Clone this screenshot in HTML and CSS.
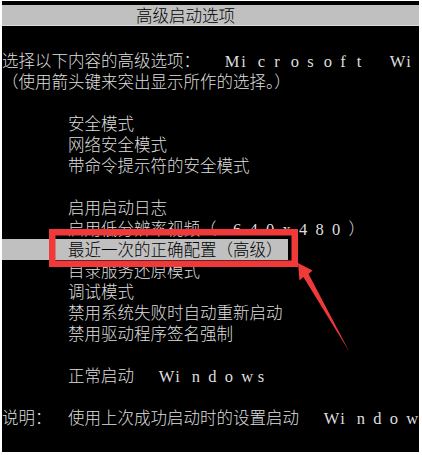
FILE: index.html
```html
<!DOCTYPE html>
<html lang="zh-CN">
<head>
    <meta charset="UTF-8">
    <title>高级启动选项</title>
    <link rel="stylesheet" href="styles.css">
</head>
<body>

    <div class="screen">
        <div class="title-bar">高级启动选项</div>

        <div class="content">
            <div class="line">选择以下内容的高级选项：<span class="en"><span>M</span><span>i</span><span>c</span><span>r</span><span>o</span><span>s</span><span>o</span><span>f</span><span>t</span><span>&nbsp;</span><span>W</span><span>i</span><span>n</span><span>d</span><span>o</span><span>w</span><span>s</span></span></div>
            <div class="line">（使用箭头键来突出显示所作的选择。）</div>

            <ul class="menu">
                <li>安全模式</li>
                <li>网络安全模式</li>
                <li>带命令提示符的安全模式</li>
            </ul>

            <ul class="menu">
                <li>启用启动日志</li>
                <li>启用低分辨率视频（<span class="en num"><span>6</span><span>4</span><span>0</span><span>x</span><span>4</span><span>8</span><span>0</span></span>）</li>
                <li class="selected">最近一次的正确配置（高级）</li>
                <li>目录服务还原模式</li>
                <li>调试模式</li>
                <li>禁用系统失败时自动重新启动</li>
                <li>禁用驱动程序签名强制</li>
            </ul>

            <ul class="menu">
                <li>正常启动<span class="en"><span>W</span><span>i</span><span>n</span><span>d</span><span>o</span><span>w</span><span>s</span></span></li>
            </ul>

            <div class="line note"><span class="label">说明：</span>使用上次成功启动时的设置启动<span class="en"><span>W</span><span>i</span><span>n</span><span>d</span><span>o</span><span>w</span><span>s</span></span></div>
        </div>

        <!-- red annotation drawn over the screen -->
        <svg class="mark" width="417" height="451" viewBox="0 0 417 451">
            <rect x="50.25" y="231.25" width="242.5" height="31.5" fill="none" stroke="#f03a3a" stroke-width="6.5"/>
            <polygon points="296,262 310.5,269.5 306.6,273 347.5,351 301.4,276 297.5,279.5" fill="#f03a3a"/>
        </svg>
    </div>

</body>
</html>
```

FILE: styles.css
```css
body {
    margin: 0;
    background-color: #ffffff;
}

.screen {
    position: relative;
    width: 417px;
    height: 451px;
    margin: 1px 3px 3px 2px;
    background-color: #000000;
    overflow: hidden;
    color: #dedede;
    font-family: "Noto Sans CJK SC", sans-serif;
    font-size: 16.5px;
    font-weight: 300;
    line-height: 21px;
    white-space: nowrap;
}

.title-bar {
    margin-top: 4px;
    height: 20px;
    line-height: 20px;
    padding-left: 134px;
    background-color: #c0c0c0;
    border-bottom: 1px solid #dadada;
    color: #000000;
}

.content {
    padding-top: 23.5px;
}

.line,
.menu li {
    height: 21px;
}

.menu {
    list-style: none;
    margin: 21px 0 0 0;
    padding: 0;
}

    .menu li {
        padding-left: 66px;
    }

    .menu li.selected {
        width: fit-content;
        padding-right: 5.5px;
        background-color: #c0c0c0;
        color: #000000;
    }

.note {
    margin-top: 21px;
}

.label {
    display: inline-block;
    width: 66px;
}

.en {
    margin-left: 24.75px;
    font-family: "Liberation Serif", serif;
    font-size: 16.5px;
    font-weight: 400;
    line-height: 1;
}

    .en span {
        display: inline-block;
        width: 16.5px;
    }

.en.num {
    margin-left: 16.5px;
}

.mark {
    position: absolute;
    left: 0;
    top: 0;
}
```
